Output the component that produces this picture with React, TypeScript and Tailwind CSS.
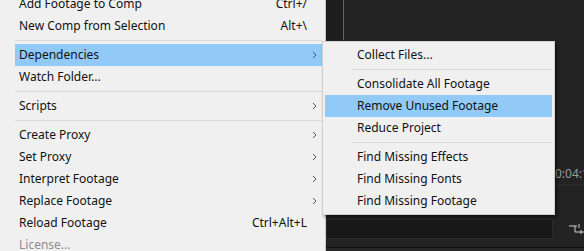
import React from "react";

type Item =
  | { sep: true }
  | { label: string; shortcut?: string; arrow?: boolean; active?: boolean; disabled?: boolean };

const mainItems: Item[] = [
  { label: "Add Footage to Comp", shortcut: "Ctrl+/" },
  { label: "New Comp from Selection", shortcut: "Alt+\\" },
  { sep: true },
  { label: "Dependencies", arrow: true, active: true },
  { label: "Watch Folder..." },
  { sep: true },
  { label: "Scripts", arrow: true },
  { sep: true },
  { label: "Create Proxy", arrow: true },
  { label: "Set Proxy", arrow: true },
  { label: "Interpret Footage", arrow: true },
  { label: "Replace Footage", arrow: true },
  { label: "Reload Footage", shortcut: "Ctrl+Alt+L" },
  { label: "License...", disabled: true },
];

const subItems: Item[] = [
  { label: "Collect Files..." },
  { sep: true },
  { label: "Consolidate All Footage" },
  { label: "Remove Unused Footage", active: true },
  { label: "Reduce Project" },
  { sep: true },
  { label: "Find Missing Effects" },
  { label: "Find Missing Fonts" },
  { label: "Find Missing Footage" },
];

const font = { fontFamily: '"Noto Sans", "Open Sans", sans-serif' };

function Chevron() {
  return (
    <svg width="5" height="8" viewBox="0 0 5 8" className="text-[#555]">
      <path d="M1 1 L4 4 L1 7" fill="none" stroke="currentColor" strokeWidth="1" />
    </svg>
  );
}

export default function App() {
  return (
    <div className="relative flex h-[251px] w-[584px] overflow-hidden bg-[#232323]" style={font}>
      {/* main context menu */}
      <div className="flex w-[326px] shrink-0 flex-col border-r border-[#c8c8c8] bg-[#f0f0f0] pl-[15px] pr-[3px] -mt-[7px]">
        {mainItems.map((it, i) =>
          "sep" in it ? (
            <div key={i} className="flex h-[7px] shrink-0 items-center">
              <div className="h-px w-full bg-[#d9d9d9]" />
            </div>
          ) : (
            <div
              key={i}
              className={`flex h-[22px] shrink-0 items-center pl-[4px] text-[12px] ${
                it.active ? "bg-[#91c9f7]" : ""
              } ${it.disabled ? "text-[#8d8d8d]" : "text-[#111]"}`}
            >
              <span className="flex-1 whitespace-nowrap">{it.label}</span>
              {it.shortcut && <span className="whitespace-nowrap">{it.shortcut}</span>}
              <span className="flex w-[15px] justify-center">{it.arrow && <Chevron />}</span>
            </div>
          )
        )}
      </div>

      {/* background app panel */}
      <div className="flex flex-1 flex-col">
        <div className="flex h-[40px] shrink-0">
          <div className="w-[17px] bg-[#1d1d1d]" />
          <div className="w-px bg-[#2f6fb8]" />
        </div>
        <div className="h-[123px] shrink-0" />
        <div className="flex h-[22px] shrink-0 items-center border-b border-[#2c2c2c] pl-[229px] text-[12px] whitespace-nowrap text-[#9a9a9a]">
          0:04:<span className="text-[#6f9fd6]">1</span>
        </div>
        <div className="h-[34px] shrink-0" />
        <div className="flex h-[20px] shrink-0 items-center gap-[14px]">
          <div className="h-full w-[227px] border border-[#2b2b2b] bg-[#181818]" />
          <svg width="20" height="14" viewBox="0 0 20 14" className="text-[#cfcfcf]">
            <path d="M2 4 H10 M8 4 V10 H18 M12 2 V6 M14 8 V12" fill="none" stroke="currentColor" strokeWidth="1" />
          </svg>
        </div>
        <div className="mt-[8px] h-px bg-[#111]" />
        <div className="flex-1 bg-[#262626]" />
      </div>

      {/* dependencies submenu */}
      <div className="absolute left-[322px] top-[41px] flex w-[233px] flex-col border border-[#cfcfcf] bg-[#f0f0f0] px-[2px] py-[2px] shadow-[2px_2px_3px_rgba(0,0,0,0.45)]">
        {subItems.map((it, i) =>
          "sep" in it ? (
            <div key={i} className="flex h-[7px] shrink-0 items-center pl-[27px]">
              <div className="h-px w-full bg-[#d9d9d9]" />
            </div>
          ) : (
            <div
              key={i}
              className={`flex h-[22px] shrink-0 items-center pl-[32px] text-[12px] text-[#111] ${
                it.active ? "bg-[#91c9f7]" : ""
              }`}
            >
              <span className="whitespace-nowrap">{it.label}</span>
            </div>
          )
        )}
      </div>
    </div>
  );
}
